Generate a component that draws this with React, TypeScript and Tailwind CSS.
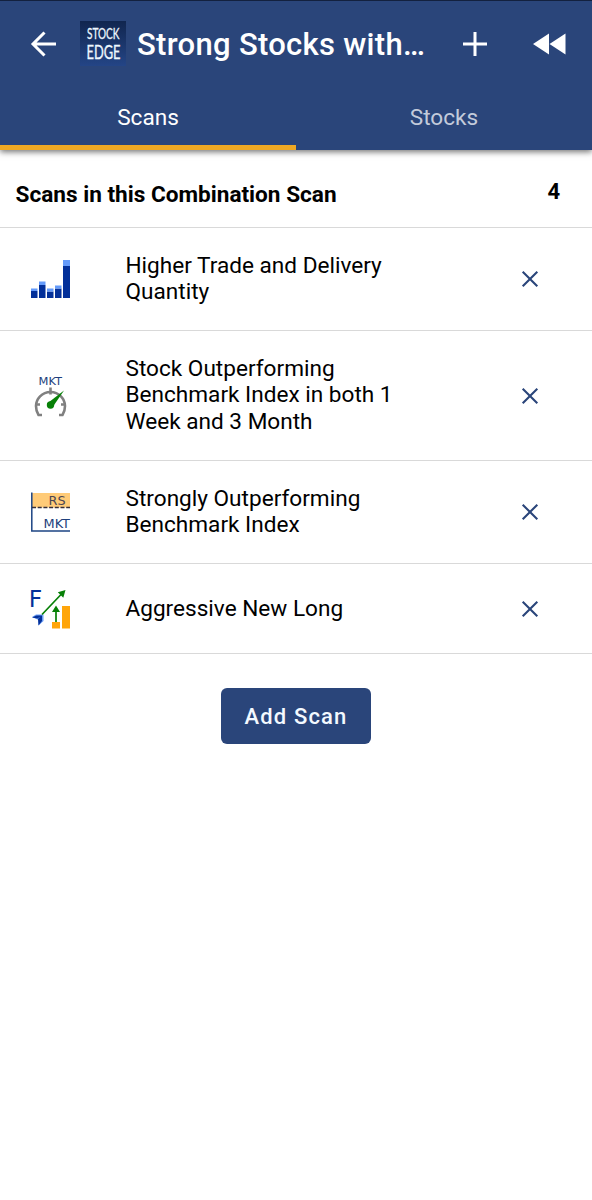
import type { ReactNode } from "react";

function VolumeIcon() {
  return (
    <svg width="60" height="60" viewBox="0 0 60 60">
      <g fill="#03309a">
        <path d="M11 42h6.500v7H11zM19 36h6.500v13H19zM27 42.500h6.500V49H27zM35 39.500h6.500V49H35zM43 17h7v32h-7z" />
      </g>
      <g fill="#659bfa">
        <path d="M11 39.500h6.500V42H11zM19 32.500h6.500V36H19zM27 39.500h6.500v3H27zM35 36.500h6.500v3H35zM43 11h7v6h-7z" />
      </g>
    </svg>
  );
}

function GaugeIcon() {
  return (
    <svg width="60" height="60" viewBox="0 0 60 60">
      <text x="18.500" y="18.500" fontFamily="DejaVu Sans" fontSize="11" fill="#1d3f7c" textLength="23.500" lengthAdjust="spacingAndGlyphs">MKT</text>
      <g fill="none" stroke="#808080" strokeWidth="2.600">
        <path d="M22 49h-3.500C16.500 46 16 43 16 40C16 33 22 26 30.500 26S45 33 45 40C45 43 44.500 46 42.500 49H39" />
        <path d="M30.500 21.500v7M16 38.500h4M41 38.500h4" />
      </g>
      <path d="M27.800 37L44 24.500L33 40.500z" fill="#078007" />
      <circle cx="30.500" cy="39" r="3.700" fill="#078007" />
    </svg>
  );
}

function RelativeStrengthIcon() {
  return (
    <svg width="60" height="60" viewBox="0 0 60 60">
      <path d="M12 11h38v14.500H12z" fill="#ffcb78" />
      <path d="M11.800 10.500v38.500H50" fill="none" stroke="#1d4484" strokeWidth="1.500" />
      <path d="M12 25.600h38" stroke="#352f3b" strokeWidth="1.500" strokeDasharray="4 1.700" />
      <g fontFamily="DejaVu Sans" fill="#1d3f7c">
        <text x="28.500" y="23" fontSize="12.500" fill="#4b4652" textLength="17" lengthAdjust="spacingAndGlyphs">RS</text>
        <text x="23.500" y="46" fontSize="12" textLength="26.500" lengthAdjust="spacingAndGlyphs">MKT</text>
      </g>
    </svg>
  );
}

function FuturesIcon() {
  return (
    <svg width="60" height="60" viewBox="0 0 60 60">
      <text x="8.800" y="27.800" fontFamily="DejaVu Sans" fontSize="22.500" fill="#03309a" textLength="13.500" lengthAdjust="spacingAndGlyphs">F</text>
      <path d="M12 38l4-2.500h7.500V42l-5 4.500V41z" fill="#6b9df5" />
      <path d="M12 38.500l4.500-2h5.500v5.500l-3.500 4.500-.5-6.500 2.500-2.500-3 2z" fill="#03309a" />
      <g fill="#ffa50a">
        <path d="M32 43h8v6.500h-8zM42 27h8v22.500h-8z" />
      </g>
      <path d="M22 35.500L41.500 15M36 43V29" fill="none" stroke="#078007" strokeWidth="1.700" />
      <path d="M45.500 11L43.300 18.700L37.800 13.200zM36 26.500L40 33H32z" fill="#078007" />
    </svg>
  );
}

function CloseIcon() {
  return (
    <svg width="24" height="24" viewBox="0 0 24 24" fill="none" stroke="#2a457a" strokeWidth="2.100">
      <path d="M4.700 4.700l14.600 14.600M19.300 4.700L4.700 19.300" />
    </svg>
  );
}

function Logo() {
  return (
    <svg width="46" height="45" viewBox="0 0 46 45" className="shrink-0 overflow-visible">
      <defs>
        <linearGradient id="logo-bg" x1="0" y1="0" x2="0" y2="1">
          <stop offset="0" stopColor="#11264f" />
          <stop offset="1" stopColor="#244586" />
        </linearGradient>
      </defs>
      <path d="M0 0h46v45H0z" fill="url(#logo-bg)" />
      <g fontFamily="Lato" fill="#eef8ff" stroke="#eef8ff" strokeWidth="0.300">
        <text x="7" y="17.800" fontSize="15" textLength="32.500" lengthAdjust="spacingAndGlyphs">STOCK</text>
        <text x="6.500" y="38" fontSize="18.500" textLength="34" lengthAdjust="spacingAndGlyphs">EDGE</text>
      </g>
    </svg>
  );
}

function ScanRow({ icon, children, className }: { icon: ReactNode; children: ReactNode; className: string }) {
  return (
    <li className={`flex items-center border-b border-[#d9d9d9] pl-5 ${className}`}>
      {icon}
      <p className="ml-[45.500px] w-[392.500px] whitespace-nowrap text-[22.600px] leading-[26.300px]">{children}</p>
      <button aria-label="Remove" className="grid size-6 place-items-center">
        <CloseIcon />
      </button>
    </li>
  );
}

export default function App() {
  return (
    <div className="min-h-[1200px] w-full bg-white font-['Roboto',sans-serif] text-black">
      <header className="h-[150px] border-t border-[#13213f] bg-[#2a457a] text-white shadow-[0_2px_6px_rgba(0,0,0,0.55)]">
        <div className="flex h-[86px] items-center">
          <button aria-label="Back" className="ml-[30px]">
            <svg width="27" height="26" viewBox="0 0 27 26" fill="none" stroke="currentColor" strokeWidth="3">
              <path d="M26 13H3M14.500 1.500L3 13l11.500 11.500" />
            </svg>
          </button>
          <div className="-mt-0.5 ml-[23px] flex">
            <Logo />
          </div>
          <h1 className="ml-[11px] w-[326px] whitespace-nowrap pt-px text-[31px] font-medium leading-9 tracking-[0.300px]">Strong Stocks with…</h1>
          <button aria-label="Add">
            <svg width="24" height="24" viewBox="0 0 24 24" stroke="currentColor" strokeWidth="3">
              <path d="M12 0v24M0 12h24" />
            </svg>
          </button>
          <button aria-label="Rewind" className="ml-[46px]">
            <svg width="33" height="22" viewBox="0 0 33 22" fill="currentColor">
              <path d="M0 11L16 .500v21zM16.500 11L32.500 .500v21z" />
            </svg>
          </button>
        </div>
        <nav className="grid h-[63px] grid-cols-2 text-center text-[22.600px] leading-[62px]">
          <button className="h-[63px] border-b-[5px] border-[#eea824]">Scans</button>
          <button className="h-[63px] border-b-[5px] border-transparent text-[#c3cbdb]">Stocks</button>
        </nav>
      </header>
      <main>
        <div className="flex h-[78px] items-center justify-between border-b border-[#d9d9d9] pl-[15.500px] pr-8 text-[22.600px] font-bold">
          <h2 className="pt-3">Scans in this Combination Scan</h2>
          <span className="pt-1.5 text-[22px]">4</span>
        </div>
        <ul>
          <ScanRow icon={<VolumeIcon />} className="h-[103px]">
            Higher Trade and Delivery<br />Quantity
          </ScanRow>
          <ScanRow icon={<GaugeIcon />} className="h-[130px]">
            Stock Outperforming<br />Benchmark Index in both 1<br />Week and 3 Month
          </ScanRow>
          <ScanRow icon={<RelativeStrengthIcon />} className="h-[103px]">
            Strongly Outperforming<br />Benchmark Index
          </ScanRow>
          <ScanRow icon={<FuturesIcon />} className="h-[90px]">
            <span className="block pt-0.5">Aggressive New Long</span>
          </ScanRow>
        </ul>
        <button className="mx-auto mt-[34px] block h-14 w-[150px] rounded-md bg-[#2a457a] text-[22px] font-medium tracking-[1.150px] text-[#f3f9ff]">
          Add Scan
        </button>
      </main>
    </div>
  );
}
